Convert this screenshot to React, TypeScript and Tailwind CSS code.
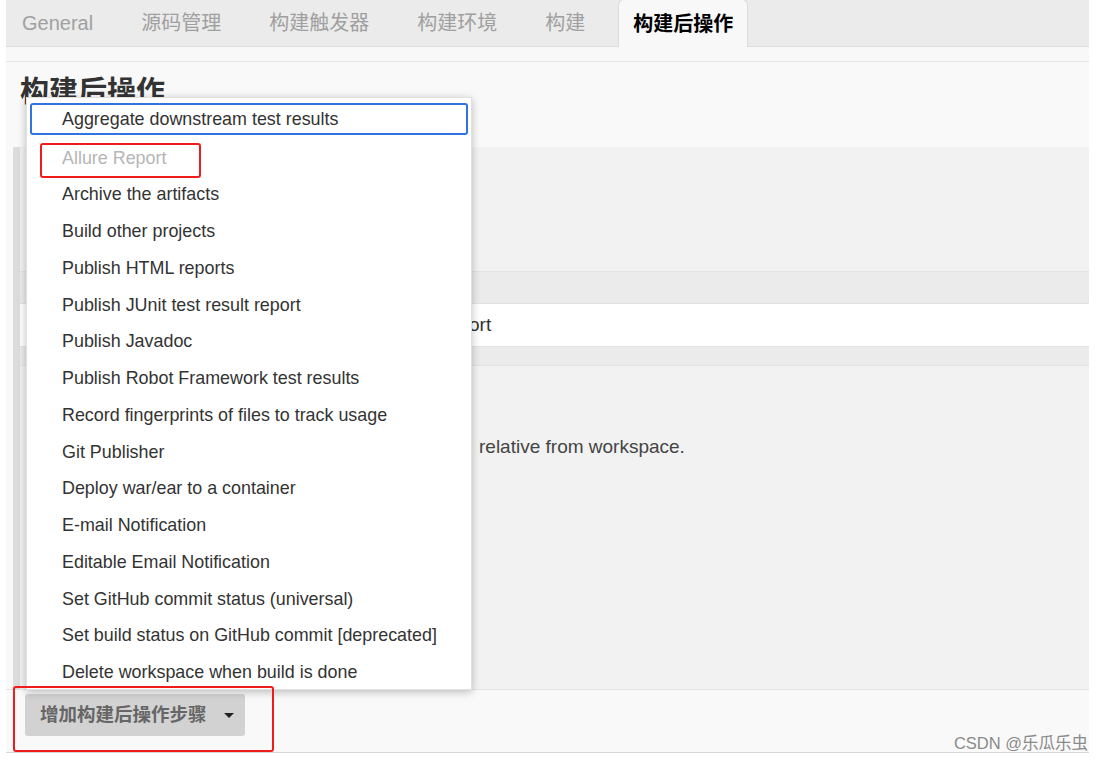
import React from 'react';

const items = [
  'Aggregate downstream test results',
  'Allure Report',
  'Archive the artifacts',
  'Build other projects',
  'Publish HTML reports',
  'Publish JUnit test result report',
  'Publish Javadoc',
  'Publish Robot Framework test results',
  'Record fingerprints of files to track usage',
  'Git Publisher',
  'Deploy war/ear to a container',
  'E-mail Notification',
  'Editable Email Notification',
  'Set GitHub commit status (universal)',
  'Set build status on GitHub commit [deprecated]',
  'Delete workspace when build is done',
];

export default function App() {
  return (
    <div className="relative w-[1105px] h-[760px] overflow-hidden bg-white font-['Liberation_Sans','Noto_Sans_CJK_SC',sans-serif] text-[#333]">
      <div className="ml-[6px] w-[1083px] h-[753px] flex flex-col border-b border-[#d8d8d8]">
        {/* Tabs */}
        <div className="h-[47px] bg-[#ebebeb] flex items-end border-b border-[#dedede] text-[20px] text-[#a0a0a0]">
          <div className="flex items-center h-[46px]">
            <span className="ml-[16px]">General</span>
            <span className="ml-[48px]">源码管理</span>
            <span className="ml-[48px]">构建触发器</span>
            <span className="ml-[48px]">构建环境</span>
            <span className="ml-[48px]">构建</span>
          </div>
          <div className="ml-[33px] h-[48px] -mb-px px-[14px] flex items-center bg-[#f8f8f8] border border-b-0 border-[#dcdcdc] rounded-t-[6px] font-bold text-black">
            构建后操作
          </div>
        </div>
        <div className="h-[15px] bg-[#f8f8f8] border-b border-[#e6e6e6]" />

        {/* Section */}
        <div className="flex-1 flex flex-col bg-[#f9f9f9]">
          <div className="h-[85px] pl-[14px] pt-[9px] text-[29px] font-bold text-[#333]">构建后操作</div>
          <div className="flex-1 flex flex-col ml-[7px] border-l-[7px] border-[#dcdcdc]">
            <div className="h-[125px] bg-[#f2f2f2] border-b border-[#e2e2e2]" />
            <div className="h-[32px] bg-[#ebebeb] border-b border-[#e2e2e2]" />
            <div className="h-[43px] bg-white border-b border-[#e2e2e2] flex items-center pl-[449px] text-[19px]">ort</div>
            <div className="h-[19px] bg-[#ebebeb] border-b border-[#e2e2e2]" />
            <div className="flex-1 bg-[#f2f2f2] pl-[459px] pt-[67px] text-[19px] text-[#444]">relative from workspace.</div>
          </div>
          <div className="h-[63px] border-t border-[#e4e4e4] pl-[19px] pt-[4px]">
            <button className="h-[42px] w-[220px] rounded-[3px] bg-[#d2d2d2] flex items-center pl-[15px] text-[18.5px] font-bold text-[#666]">
              增加构建后操作步骤
              <span className="ml-[17px] w-0 h-0 border-l-[5px] border-r-[5px] border-t-[5px] border-l-transparent border-r-transparent border-t-[#222]" />
            </button>
          </div>
        </div>
      </div>

      {/* Dropdown menu */}
      <div className="absolute left-[26px] top-[97px] w-[446px] h-[593px] bg-white pt-[3px] shadow-[0_2px_8px_rgba(0,0,0,0.25)] border border-[#e0e0e0] text-[17.9px] text-[#333]">
        {items.map((t, i) => (
          <div key={t} className="h-[36.75px] px-[3px]">
            {i === 0 ? (
              <div className="h-[32px] mt-[2px] border-2 border-[#2f74e0] rounded-[3px] flex items-center pl-[30px]">{t}</div>
            ) : (
              <div className={`h-full flex items-center pl-[32px] ${i === 1 ? 'text-[#b5b5b5]' : ''}`}>{t}</div>
            )}
          </div>
        ))}
      </div>

      {/* Annotations */}
      <div className="absolute left-[40px] top-[143px] w-[161px] h-[35px] border-2 border-[#f01c1c] rounded-[3px]" />
      <div className="absolute left-[13px] top-[686px] w-[261px] h-[66px] border-2 border-[#f01c1c] rounded-[3px]" />
      <div className="absolute right-[17px] top-[731px] text-[16.5px] text-[#8a8a8a]">CSDN @乐瓜乐虫</div>
    </div>
  );
}
